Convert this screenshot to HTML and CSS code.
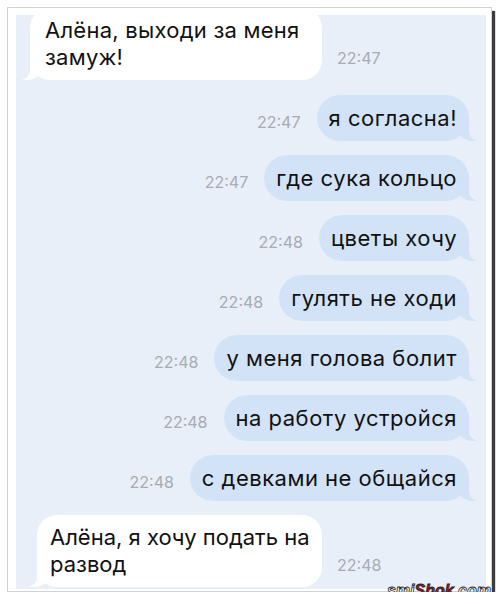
FILE: index.html
```html
<!DOCTYPE html>
<html lang="ru">
<head>
  <meta charset="UTF-8">
  <title>Алёна</title>
  <link rel="stylesheet" href="styles.css">
</head>
<body>

<div class="frame">
  <div class="chat">
    <div class="row in first">
      <div class="bubble">Алёна, выходи за меня<br>замуж!</div>
      <span class="time">22:47</span>
    </div>
    <div class="row out">
      <span class="time">22:47</span>
      <div class="bubble">я согласна!</div>
    </div>
    <div class="row out">
      <span class="time">22:47</span>
      <div class="bubble">где сука кольцо</div>
    </div>
    <div class="row out">
      <span class="time">22:48</span>
      <div class="bubble">цветы хочу</div>
    </div>
    <div class="row out">
      <span class="time">22:48</span>
      <div class="bubble">гулять не ходи</div>
    </div>
    <div class="row out">
      <span class="time">22:48</span>
      <div class="bubble">у меня голова болит</div>
    </div>
    <div class="row out">
      <span class="time">22:48</span>
      <div class="bubble">на работу устройся</div>
    </div>
    <div class="row out">
      <span class="time">22:48</span>
      <div class="bubble">с девками не общайся</div>
    </div>
    <div class="row in last">
      <div class="bubble">Алёна, я хочу подать на<br>развод</div>
      <span class="time">22:48</span>
    </div>
  </div>
  <div class="watermark">smi<span class="shok">Shok</span>.com</div>
</div>

</body>
</html>
```

FILE: styles.css
```css
/* Reset */
* {
  margin: 0;
  padding: 0;
  box-sizing: border-box;
}

body {
  background: #fff;
  font-family: Inter, Roboto, "Noto Sans", sans-serif;
  color: #111;
}

/* Outer photo frame */
.frame {
  position: relative;
  margin: 7px 0 0 7px;
  width: 485px;
  height: 585px;
  padding: 7px 5px 2px 8px;
  border: 1px solid #d2d2d2;
  background: #fff;
  box-shadow: 3px 4px 1px #3c3c3c;
}

/* Chat area */
.chat {
  height: 100%;
  background: #e9eff8;
  overflow: hidden;
  padding: 0 17px 0 14px;
  display: flex;
  flex-direction: column;
  gap: 14px;
}

.row {
  display: flex;
}

.row.first {
  margin-top: -7px;
  margin-bottom: 1px;
}

.row.last {
  margin-left: 7px;
}

.bubble {
  position: relative;
  z-index: 0;
  font-size: 22px;
  line-height: 26px;
  letter-spacing: 0.5px;
  white-space: nowrap;
}

.time {
  font-size: 16px;
  color: #a7abb2;
}

/* Outgoing messages */
.out {
  justify-content: flex-end;
  align-items: center;
}

.out .time {
  margin-right: 16px;
  padding-top: 8px;
}

.out .bubble {
  background: #d3e3f7;
  padding: 10px 12px;
  border-radius: 23px;
}

.out .bubble::before {
  content: "";
  position: absolute;
  z-index: -1;
  right: -8px;
  bottom: 0;
  width: 20px;
  height: 22px;
  background: #d3e3f7;
  border-bottom-left-radius: 16px 14px;
}

.out .bubble::after {
  content: "";
  position: absolute;
  z-index: -1;
  right: -26px;
  bottom: 0;
  width: 26px;
  height: 22px;
  background: #e9eff8;
  border-bottom-left-radius: 10px;
}

/* Incoming messages */
.in {
  align-items: flex-end;
}

.in .bubble {
  background: #fff;
  line-height: 27px;
  letter-spacing: 0.25px;
  padding: 9px 15px;
  border-radius: 20px;
  width: 292px;
}

.in.last .bubble {
  width: 285px;
  padding-left: 13px;
  letter-spacing: 0;
}

.in .bubble::before {
  content: "";
  position: absolute;
  z-index: -1;
  left: -7px;
  bottom: 0;
  width: 20px;
  height: 22px;
  background: #fff;
  border-bottom-right-radius: 16px 14px;
}

.in .bubble::after {
  content: "";
  position: absolute;
  z-index: -1;
  left: -26px;
  bottom: 0;
  width: 26px;
  height: 22px;
  background: #e9eff8;
  border-bottom-right-radius: 10px;
}

.in .time {
  margin-left: 15px;
  margin-bottom: 12px;
}

/* Watermark */
.watermark {
  position: absolute;
  right: 0;
  bottom: -7px;
  font-family: "Liberation Sans", sans-serif;
  font-weight: bold;
  font-style: italic;
  font-size: 16px;
  line-height: 14px;
  letter-spacing: 0;
  color: #fff;
  -webkit-text-stroke: 0.8px #222;
}

.shok {
  color: #a01b24;
}
```
